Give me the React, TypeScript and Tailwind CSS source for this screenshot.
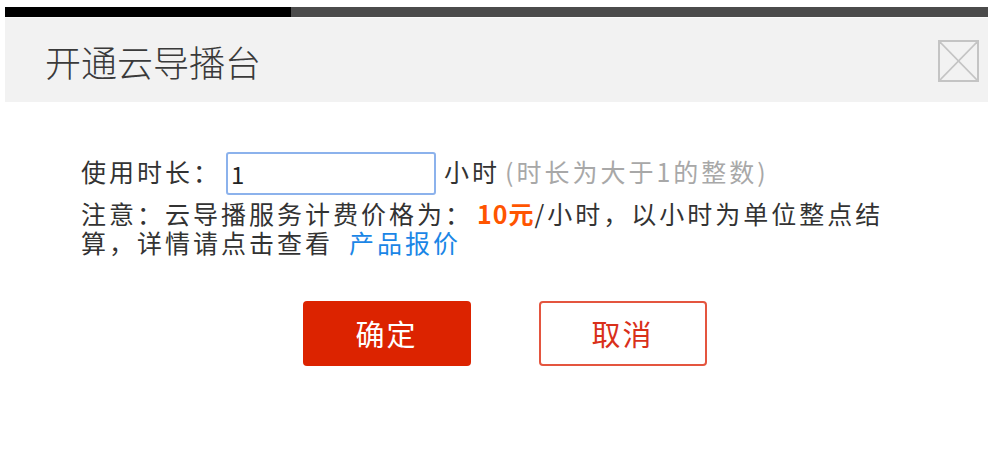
import React from "react";

export default function App() {
  const font = { fontFamily: '"Noto Sans CJK SC", "Noto Sans", sans-serif' };
  return (
    <div className="w-[992px] h-[456px] bg-white pt-[7px] pl-[5px] pr-[4px] overflow-hidden" style={font}>
      <div className="flex h-[10px]">
        <div className="w-[286px] bg-black" />
        <div className="flex-1 bg-[#4b4b4b]" />
      </div>
      <div className="h-[85px] bg-[#f2f2f2] flex items-center justify-between pl-[40px] pr-[9px] border-t border-[#fafafa]">
        <div className="text-[36px] text-[#3a3a3a] font-light leading-none mt-[1px]">开通云导播台</div>
        <div className="w-[41px] h-[42px] border-2 border-[#c4c4c4] mt-[1px]">
          <svg viewBox="0 0 37 38" className="w-full h-full block">
            <line x1="0" y1="0" x2="37" y2="38" stroke="#c4c4c4" strokeWidth="1.6" />
            <line x1="37" y1="0" x2="0" y2="38" stroke="#c4c4c4" strokeWidth="1.6" />
          </svg>
        </div>
      </div>
      <div className="pl-[76px] pt-[50px] text-[25px] text-[#333] tracking-[3px]">
        <div className="flex items-center h-[43px]">
          <span className="-mt-[3px]">使用时长：</span>
          <div className="ml-[5px] w-[210px] h-[43px] border-2 border-[#8cb2ec] rounded-[3px] flex items-center pl-[3px] tracking-normal text-[24px] text-[#222]">
            1
          </div>
          <span className="ml-[8px] -mt-[3px]">小时</span>
          <span className="ml-[5px] -mt-[3px] text-[#a8a8a8]">(时长为大于1的整数)</span>
        </div>
        <div className="mt-[4px] flex flex-col">
          <div className="flex items-center h-[29px] leading-[29px] whitespace-nowrap">
            <span>注意：云导播服务计费价格为：</span>
            <span className="ml-[4px] text-[#ff5500] font-bold tracking-[1px]">10元</span>
            <span>/小时，以小时为单位整点结</span>
          </div>
          <div className="flex items-center h-[29px] leading-[29px] whitespace-nowrap">
            <span>算，详情请点击查看</span>
            <span className="ml-[16px] text-[#1a86e6]">产品报价</span>
          </div>
        </div>
      </div>
      <div className="flex justify-center gap-[68px] mt-[44px] pl-[16px]">
        <button className="w-[168px] h-[65px] rounded-[4px] bg-[#dc2300] text-white text-[29px] tracking-[2px]">
          确定
        </button>
        <button className="w-[168px] h-[65px] rounded-[4px] border-2 border-[#e4553f] bg-white text-[#d9301a] text-[29px] tracking-[2px]">
          取消
        </button>
      </div>
    </div>
  );
}
